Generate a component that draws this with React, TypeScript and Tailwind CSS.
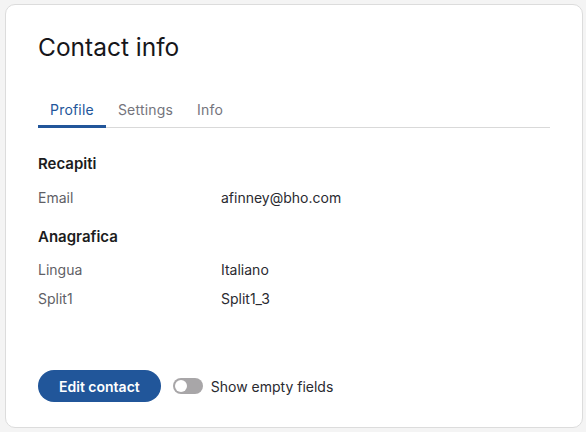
import { useState } from "react";

const rows1 = [{ label: "Email", value: "afinney@bho.com" }];
const rows2 = [
  { label: "Lingua", value: "Italiano" },
  { label: "Split1", value: "Split1_3" },
];

function Row({ label, value }: { label: string; value: string }) {
  return (
    <div className="flex h-[29px] items-center text-[14px]">
      <span className="w-[183px] text-[#5f5f66]">{label}</span>
      <span className="text-[#2a2a30]">{value}</span>
    </div>
  );
}

export default function App() {
  const [tab, setTab] = useState("Profile");
  const [showEmpty, setShowEmpty] = useState(false);

  return (
    <div
      className="min-h-screen bg-[#f4f4f4] px-[5px] pt-[4px] pb-[4px]"
      style={{ fontFamily: "Inter, 'Noto Sans', sans-serif" }}
    >
      <div className="flex h-[424px] w-[578px] flex-col rounded-[10px] border border-[#dcdcdc] bg-white px-[32px]">
        <h1 className="mt-[26px] text-[24.5px] leading-[32px] text-[#16161a]">Contact info</h1>

        <div className="mt-[37px] flex border-b border-[#d9d9d9]">
          {["Profile", "Settings", "Info"].map((t) => (
            <button
              key={t}
              onClick={() => setTab(t)}
              className={
                tab === t
                  ? "-mb-px border-b-[3px] border-[#22569a] px-[12px] pb-[5px] text-[14px] leading-[20px] tracking-[0.2px] text-[#22569a]"
                  : "-mb-px border-b-[3px] border-transparent px-[12px] pb-[5px] text-[14px] leading-[20px] tracking-[0.2px] text-[#74747c]"
              }
            >
              {t}
            </button>
          ))}
        </div>

        <h2 className="mt-[25px] text-[15px] leading-[22px] font-semibold text-[#1c1c20]">Recapiti</h2>
        <div className="mt-[8px]">
          {rows1.map((r) => (
            <Row key={r.label} {...r} />
          ))}
        </div>
        <h2 className="mt-[14px] text-[15px] leading-[22px] font-semibold text-[#1c1c20]">Anagrafica</h2>
        <div className="mt-[7px]">
          {rows2.map((r) => (
            <Row key={r.label} {...r} />
          ))}
        </div>

        <div className="mt-[57px] flex items-center">
          <button className="h-[32px] rounded-full bg-[#21569a] px-[21px] text-[14px] font-semibold text-white">
            Edit contact
          </button>
          <button
            onClick={() => setShowEmpty(!showEmpty)}
            className="ml-[12px] flex items-center gap-[8px] text-[14px] text-[#2a2a30]"
          >
            <span
              className={
                showEmpty
                  ? "flex h-[16px] w-[30px] items-center justify-end rounded-full bg-[#21569a] p-[2px]"
                  : "flex h-[16px] w-[30px] items-center rounded-full bg-[#a8a6a8] p-[2px]"
              }
            >
              <span className="h-[12px] w-[12px] rounded-full bg-white" />
            </span>
            Show empty fields
          </button>
        </div>
      </div>
    </div>
  );
}
